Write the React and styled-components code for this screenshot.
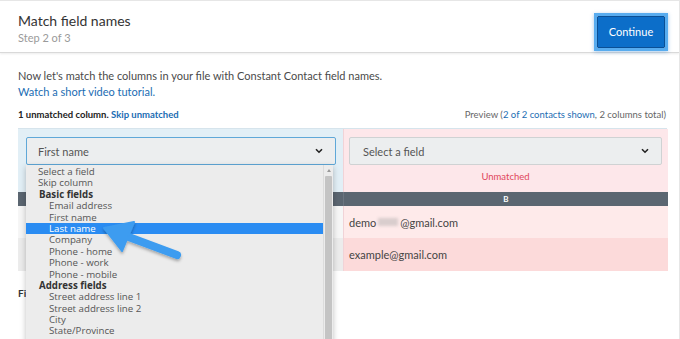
import React from "react";
import styled, { createGlobalStyle } from "styled-components";

const Global = createGlobalStyle`
  html, body { margin: 0; padding: 0; background: #fff; }
  body { font-family: Lato, "Open Sans", "Liberation Sans", sans-serif; color: #444; }
`;

const Page = styled.div`
  position: relative;
  width: 679px;
  height: 338px;
  overflow: hidden;
  border-top: 1px solid #e6e6e6;
  border-right: 1px solid #e6e6e6;
  background: #fff;
`;

const Header = styled.header`
  display: flex;
  align-items: center;
  justify-content: space-between;
  height: 51px;
  padding: 0 11px 0 18px;
  border-bottom: 1px solid #d9d9d9;
  box-shadow: 0 1px 2px rgba(0, 0, 0, 0.08);
`;

const TitleBlock = styled.div`
  display: flex;
  flex-direction: column;
  gap: 2px;
  margin-top: 3px;
`;

const Title = styled.h1`
  margin: 0;
  font-size: 14px;
  font-weight: 400;
  color: #333;
  line-height: 17px;
`;

const Step = styled.div`
  font-size: 11px;
  color: #9a9a9a;
  line-height: 13px;
`;

const Highlight = styled.div`
  border: 3px solid #58acef;
  box-shadow: 0 1px 4px rgba(40, 120, 200, 0.4);
  display: flex;
  margin-top: 10px;
`;

const Button = styled.button`
  font-family: Lato, "Open Sans", sans-serif;
  font-size: 11px;
  color: #fff;
  background: #0c6ec9;
  border: 1px solid #0a4f95;
  border-radius: 1px;
  width: 68px;
  height: 32px;
  padding: 0;
`;

const Body = styled.div`
  padding: 15px 12px 0 18px;
`;

const Intro = styled.p`
  margin: 0;
  font-size: 11px;
  line-height: 16px;
  color: #4a4a4a;
`;

const Link = styled.a`
  color: #1b6db3;
  text-decoration: none;
`;

const MetaRow = styled.div`
  display: flex;
  justify-content: space-between;
  align-items: center;
  margin-top: 7px;
  height: 15px;
  font-size: 9.5px;
`;

const Unmatched = styled.span`
  font-weight: 700;
  color: #222;
`;

const Preview = styled.span`
  color: #666;
  padding-right: 1px;
`;

const Table = styled.div`
  display: grid;
  grid-template-columns: 325px 325px;
  grid-template-rows: 63px 14px 32px 33px;
  margin-top: 6px;
  border-top: 1px solid #d6e4ec;
`;

const SelectCell = styled.div`
  position: relative;
  display: flex;
  flex-direction: column;
  align-items: stretch;
  padding: ${(p) => (p.$bad ? "8px 6px 0 5px" : "8px 7px 0 8px")};
  background: ${(p) => (p.$bad ? "#fde7ea" : "#e2eff6")};
  border-left: ${(p) => (p.$bad ? "1px solid #f1d3d7" : "none")};
`;

const Select = styled.div`
  display: flex;
  align-items: center;
  justify-content: space-between;
  height: 26px;
  padding: 0 12px 0 ${(p) => (p.$active ? 11 : 13)}px;
  background: #eceeef;
  border: 1px solid ${(p) => (p.$active ? "#5fa8d8" : "#cfd2d3")};
  border-radius: 2px;
  font-size: 11px;
  color: #555;
`;

const Chevron = () => (
  <svg width="8" height="6" viewBox="0 0 8 6">
    <path d="M1 1.2 L4 4.2 L7 1.2" fill="none" stroke="#222" strokeWidth="1.6" />
  </svg>
);

const StatusLabel = styled.div`
  text-align: center;
  font-size: 9.5px;
  color: #e0465a;
  margin-top: 6px;
`;

const HeadCell = styled.div`
  background: #5b6671;
  color: #fff;
  font-size: 8px;
  font-weight: 700;
  display: flex;
  align-items: center;
  justify-content: center;
  border-left: ${(p) => (p.$bad ? "1px solid #6b7580" : "none")};
`;

const DataCell = styled.div`
  display: flex;
  align-items: center;
  padding-left: ${(p) => (p.$bad ? 5 : 12)}px;
  font-size: 11px;
  color: #444;
  background: ${(p) => p.$bg};
  border-left: ${(p) => (p.$bad ? "1px solid #f1d3d7" : "none")};
`;

const Blur = styled.span`
  display: inline-block;
  width: 20px;
  height: 8px;
  background: #d9cdcd;
  filter: blur(1.5px);
  margin: 0 2px;
`;

const Footer = styled.div`
  margin-top: 16px;
  font-size: 10px;
  font-weight: 700;
  color: #333;
`;

const List = styled.div`
  position: absolute;
  left: 8px;
  top: 36px;
  width: 307px;
  height: 190px;
  background: #ececec;
  box-shadow: 0 2px 6px rgba(0, 0, 0, 0.25);
  display: flex;
  z-index: 2;
  font-family: "Open Sans", "DejaVu Sans", sans-serif;
`;

const Options = styled.div`
  flex: 1;
  padding-top: 1px;
`;

const Option = styled.div`
  height: 11.4px;
  line-height: 11.4px;
  font-size: 9.7px;
  padding-left: ${(p) => (p.$child ? 23 : p.$group ? 13 : 12)}px;
  font-weight: ${(p) => (p.$group ? 700 : 400)};
  color: ${(p) => (p.$sel ? "#fff" : p.$group ? "#333" : "#555")};
  background: ${(p) => (p.$sel ? "#2a8cf2" : "transparent")};
  white-space: nowrap;
`;

const Scroll = styled.div`
  width: 9px;
  background: #ececec;
  border-left: 1px solid #dcdcdc;
  display: flex;
  flex-direction: column;
  align-items: center;
`;

const ScrollUp = styled.div`
  width: 0;
  height: 0;
  margin-top: 4px;
  border-left: 2.5px solid transparent;
  border-right: 2.5px solid transparent;
  border-bottom: 3px solid #999;
`;

const Thumb = styled.div`
  width: 7px;
  flex: 1;
  margin-top: 4px;
  background: #c4c4c4;
  border-radius: 1px;
`;

const ArrowLayer = styled.svg`
  position: absolute;
  left: 0;
  top: 0;
  pointer-events: none;
  z-index: 3;
`;

const options = [
  { t: "Select a field" },
  { t: "Skip column" },
  { t: "Basic fields", g: true },
  { t: "Email address", c: true },
  { t: "First name", c: true },
  { t: "Last name", c: true, s: true },
  { t: "Company", c: true },
  { t: "Phone - home", c: true },
  { t: "Phone - work", c: true },
  { t: "Phone - mobile", c: true },
  { t: "Address fields", g: true },
  { t: "Street address line 1", c: true },
  { t: "Street address line 2", c: true },
  { t: "City", c: true },
  { t: "State/Province", c: true },
  { t: "Zip/Postal code", c: true },
];

export default function App() {
  return (
    <>
      <Global />
      <Page>
        <Header>
          <TitleBlock>
            <Title>Match field names</Title>
            <Step>Step 2 of 3</Step>
          </TitleBlock>
          <Highlight>
            <Button>Continue</Button>
          </Highlight>
        </Header>
        <Body>
          <Intro>
            Now let's match the columns in your file with Constant Contact field names.
            <br />
            <Link>Watch a short video tutorial.</Link>
          </Intro>
          <MetaRow>
            <Unmatched>
              1 unmatched column. <Link>Skip unmatched</Link>
            </Unmatched>
            <Preview>
              Preview (<Link>2 of 2 contacts shown</Link>, 2 columns total)
            </Preview>
          </MetaRow>
          <Table>
            <SelectCell>
              <Select $active>
                <span>First name</span>
                <Chevron />
              </Select>
              <List>
                <Options>
                  {options.map((o) => (
                    <Option key={o.t} $group={o.g} $child={o.c} $sel={o.s}>
                      {o.t}
                    </Option>
                  ))}
                </Options>
                <Scroll>
                  <ScrollUp />
                  <Thumb />
                </Scroll>
              </List>
            </SelectCell>
            <SelectCell $bad>
              <Select>
                <span>Select a field</span>
                <Chevron />
              </Select>
              <StatusLabel>Unmatched</StatusLabel>
            </SelectCell>
            <HeadCell>A</HeadCell>
            <HeadCell $bad>B</HeadCell>
            <DataCell $bg="#f6f6f6">Demo</DataCell>
            <DataCell $bad $bg="#feeaea">
              demo<Blur />@gmail.com
            </DataCell>
            <DataCell $bg="#ececec">Example</DataCell>
            <DataCell $bad $bg="#fcdada">example@gmail.com</DataCell>
          </Table>
          <Footer>First row contains column names</Footer>
        </Body>
        <ArrowLayer width="680" height="339" viewBox="0 0 680 339">
          <defs>
            <filter id="sh" x="-20%" y="-20%" width="140%" height="160%">
              <feDropShadow dx="0" dy="2" stdDeviation="1.5" floodColor="#000" floodOpacity="0.3" />
            </filter>
          </defs>
          <g filter="url(#sh)" fill="#3d9cf0" stroke="#3d9cf0">
            <line x1="177" y1="254" x2="126" y2="235" strokeWidth="8" strokeLinecap="round" />
            <path d="M104 227 L134 221 L122 250 Z" strokeWidth="2" strokeLinejoin="round" />
          </g>
        </ArrowLayer>
      </Page>
    </>
  );
}
